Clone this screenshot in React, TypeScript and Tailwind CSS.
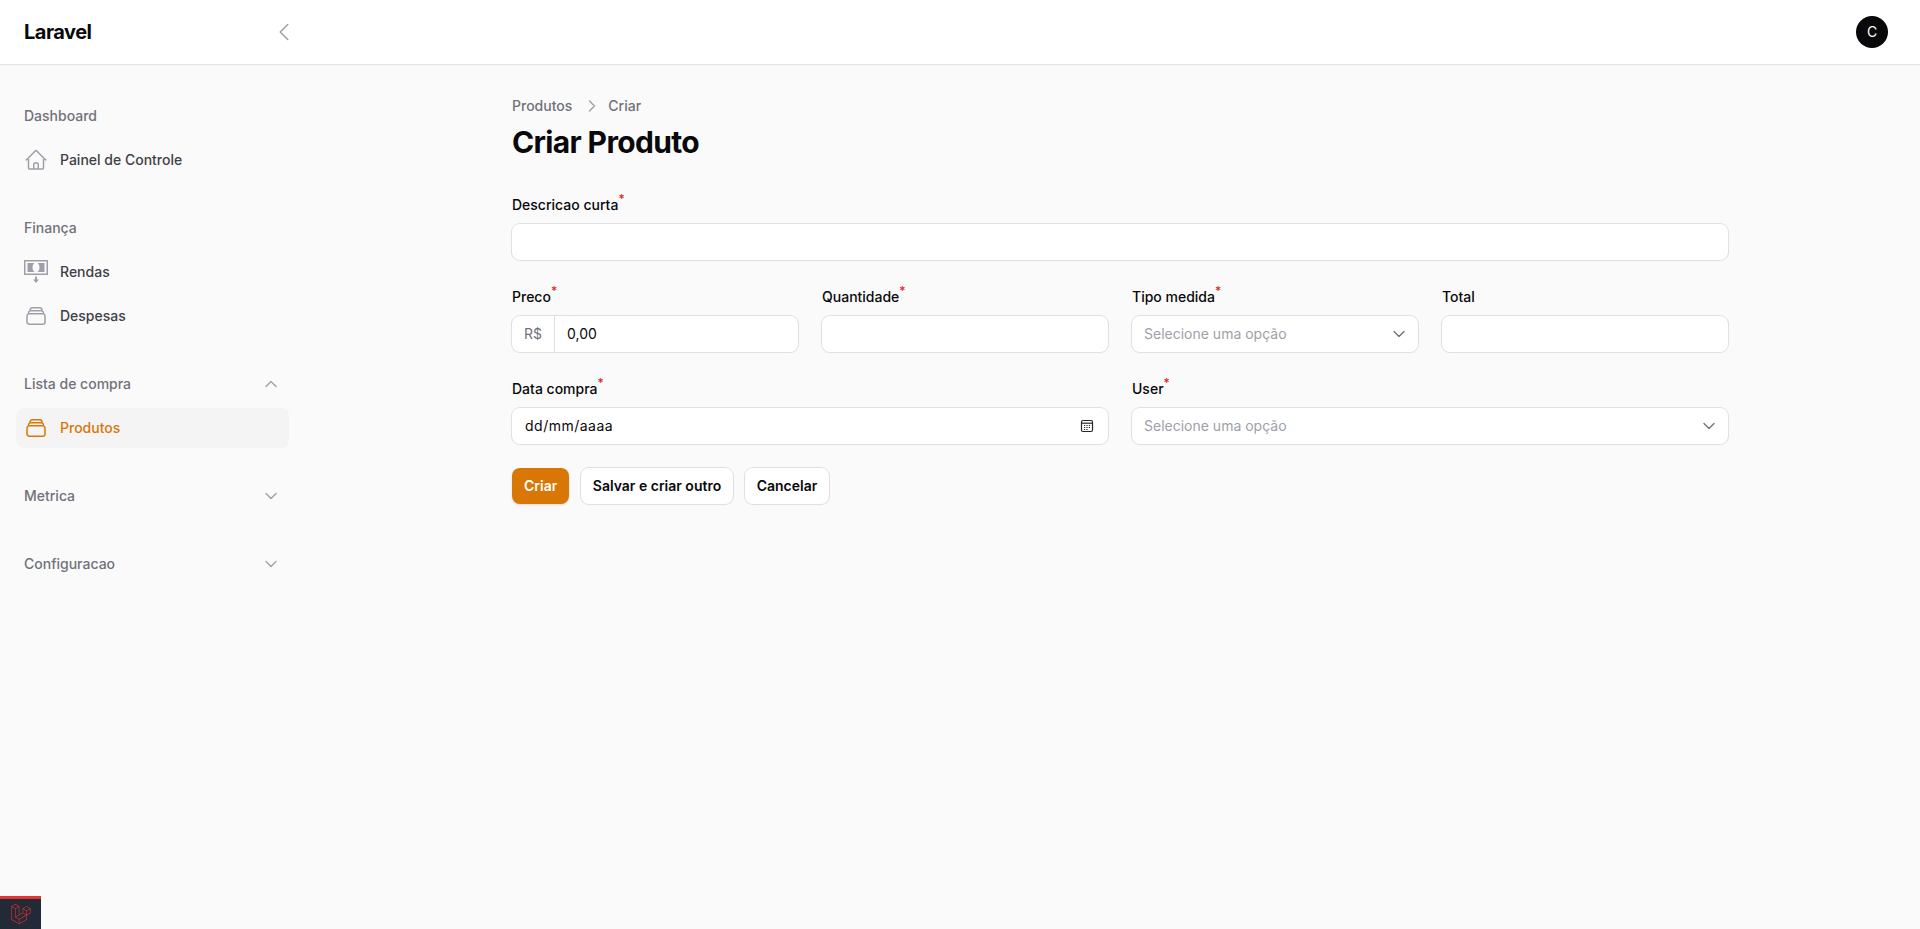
import { ReactNode } from 'react';
import { FaLaravel } from 'react-icons/fa';
import {
  HiOutlineChevronDown,
  HiOutlineChevronLeft,
  HiOutlineChevronRight,
  HiOutlineChevronUp,
  HiOutlineHome,
  HiOutlineRectangleStack
} from 'react-icons/hi2';

function IncomeIcon() {
  return (
    <svg viewBox="0 0 24 24" className="h-6 w-6 text-zinc-400" fill="none">
      <rect x="0.75" y="0.75" width="22.5" height="13.5" stroke="currentColor" strokeWidth="1.5" />
      <path d="M3.5 3h17v9h-17z" fill="currentColor" />
      <ellipse cx="12" cy="7.5" rx="3.5" ry="5" fill="#fafafa" />
      <path d="M11 16.5h2v3h2l-3 3.5-3-3.5h2z" fill="currentColor" />
    </svg>
  );
}

function CalendarIcon() {
  return (
    <svg viewBox="0 0 14 14" className="h-3.5 w-3.5" fill="none">
      <rect x="1.5" y="1.5" width="11" height="11" rx="1.5" stroke="#27272a" strokeWidth="1.2" />
      <path d="M2 4.2h10" stroke="#27272a" strokeWidth="1.2" />
      <path d="M4 6.5h1.2M6.4 6.5h1.2M8.8 6.5H10M4 8.5h1.2M6.4 8.5h1.2M8.8 8.5H10M4 10.5h1.2M6.4 10.5h1.2" stroke="#27272a" />
    </svg>
  );
}

function GroupLabel({ label, chevron }: { label: string; chevron?: 'up' | 'down' }) {
  return (
    <div className="flex h-9 items-center justify-between pr-[41px] pl-6 text-sm font-medium text-zinc-500">
      <span>{label}</span>
      {chevron === 'up' && <HiOutlineChevronUp className="h-4 w-4 text-zinc-400" strokeWidth={2} />}
      {chevron === 'down' && <HiOutlineChevronDown className="h-4 w-4 text-zinc-400" strokeWidth={2} />}
    </div>
  );
}

function NavItem({ icon, label, active }: { icon: ReactNode; label: string; active?: boolean }) {
  return (
    <div
      data-active={active}
      className="ml-4 flex h-10 w-[273px] items-center gap-3 rounded-lg px-2 text-sm font-medium text-zinc-700 data-[active=true]:bg-[#f4f4f5] data-[active=true]:text-[#d97706]"
    >
      {icon}
      <span>{label}</span>
    </div>
  );
}

function Label({ text, required }: { text: string; required?: boolean }) {
  return (
    <label className="flex h-5 items-center text-sm font-medium text-[#09090b]">
      {text}
      {required && <sup className="text-xs font-medium text-[#dc2626]">*</sup>}
    </label>
  );
}

function Box({ children, className }: { children?: ReactNode; className?: string }) {
  return (
    <div className={`flex h-9 items-center rounded-lg bg-white text-sm shadow-[0_1px_2px_rgba(0,0,0,0.04)] ring-1 ring-[#e0e0e3] ${className ?? ''}`}>
      {children}
    </div>
  );
}

function SelectBox() {
  return (
    <Box className="justify-between pr-[11px] pl-3">
      <span className="text-zinc-400">Selecione uma opção</span>
      <HiOutlineChevronDown className="h-4 w-4 text-zinc-500" strokeWidth={2} />
    </Box>
  );
}

export default function App() {
  return (
    <div className="flex min-h-[929px] flex-col bg-[#fafafa] font-['Inter',sans-serif]">
      <header className="flex h-[65px] items-center justify-between border-b border-[#e4e4e7] bg-white pr-8 pl-6 shadow-[0_1px_2px_rgba(0,0,0,0.03)]">
        <div className="flex w-[272px] items-center justify-between">
          <span className="text-xl leading-5 font-bold tracking-tight text-[#09090b]">Laravel</span>
          <HiOutlineChevronLeft className="h-6 w-6 text-zinc-400" strokeWidth={1.5} />
        </div>
        <div className="flex h-8 w-8 items-center justify-center rounded-full bg-[#09090b] text-sm text-white">C</div>
      </header>

      <div className="flex flex-1">
        <aside className="flex w-[320px] shrink-0 flex-col gap-[30px] pt-[33px]">
          <div className="flex flex-col">
            <GroupLabel label="Dashboard" />
            <div className="mt-1.5 flex flex-col gap-1">
              <NavItem label="Painel de Controle" icon={<HiOutlineHome className="h-6 w-6 text-zinc-400" />} />
            </div>
          </div>
          <div className="flex flex-col">
            <GroupLabel label="Finança" />
            <div className="mt-1.5 flex flex-col gap-1">
              <NavItem label="Rendas" icon={<IncomeIcon />} />
              <NavItem label="Despesas" icon={<HiOutlineRectangleStack className="h-6 w-6 text-zinc-400" />} />
            </div>
          </div>
          <div className="flex flex-col">
            <GroupLabel label="Lista de compra" chevron="up" />
            <div className="mt-1.5 flex flex-col gap-1">
              <NavItem active label="Produtos" icon={<HiOutlineRectangleStack className="h-6 w-6 text-[#d97706]" />} />
            </div>
          </div>
          <GroupLabel label="Metrica" chevron="down" />
          <div className="mt-0.5">
            <GroupLabel label="Configuracao" chevron="down" />
          </div>
        </aside>

        <main className="flex-1 pt-[31px] pr-[192px] pl-[192px]">
          <nav className="flex h-5 items-center gap-2.5 text-sm font-medium text-zinc-500">
            <span>Produtos</span>
            <HiOutlineChevronRight className="h-4 w-4 translate-x-0.5 text-zinc-400" strokeWidth={2} />
            <span>Criar</span>
          </nav>
          <h1 className="mt-2 text-3xl leading-9 font-bold tracking-[-0.65px] text-[#09090b]">Criar Produto</h1>

          <form className="mt-[35px] grid grid-cols-4 gap-x-6 gap-y-[27px]">
            <div className="col-span-4 flex flex-col gap-[9px]">
              <Label text="Descricao curta" required />
              <Box />
            </div>
            <div className="flex flex-col gap-[9px]">
              <Label text="Preco" required />
              <Box>
                <span className="flex h-full w-[43px] items-center justify-center border-r border-[#e0e0e3] text-zinc-500">R$</span>
                <span className="pl-3 text-[#09090b]">0,00</span>
              </Box>
            </div>
            <div className="flex flex-col gap-[9px]">
              <Label text="Quantidade" required />
              <Box />
            </div>
            <div className="flex flex-col gap-[9px]">
              <Label text="Tipo medida" required />
              <SelectBox />
            </div>
            <div className="flex flex-col gap-[9px]">
              <Label text="Total" />
              <Box />
            </div>
            <div className="col-span-2 flex flex-col gap-[9px]">
              <Label text="Data compra" required />
              <Box className="justify-between pr-3.5 pl-[13px]">
                <span className="tracking-[0.5px] text-[#09090b]">dd/mm/aaaa</span>
                <CalendarIcon />
              </Box>
            </div>
            <div className="col-span-2 flex flex-col gap-[9px]">
              <Label text="User" required />
              <SelectBox />
            </div>
          </form>

          <div className="mt-6 flex gap-3 text-sm font-semibold">
            <button className="h-9 rounded-lg bg-[#d97706] px-3 text-white shadow-sm">Criar</button>
            <button className="h-9 rounded-lg bg-white px-[11.5px] text-[#09090b] shadow-[0_1px_2px_rgba(0,0,0,0.04)] ring-1 ring-[#e0e0e3]">Salvar e criar outro</button>
            <button className="h-9 rounded-lg bg-white px-3 text-[#09090b] shadow-[0_1px_2px_rgba(0,0,0,0.04)] ring-1 ring-[#e0e0e3]">Cancelar</button>
          </div>
        </main>
      </div>

      <div className="fixed bottom-0 left-0 flex h-[33px] w-[41px] items-center justify-center border-t-[3px] border-[#e3342f] bg-[#222a37]">
        <FaLaravel className="h-5 w-5 text-[#d9302f]" />
      </div>
    </div>
  );
}
